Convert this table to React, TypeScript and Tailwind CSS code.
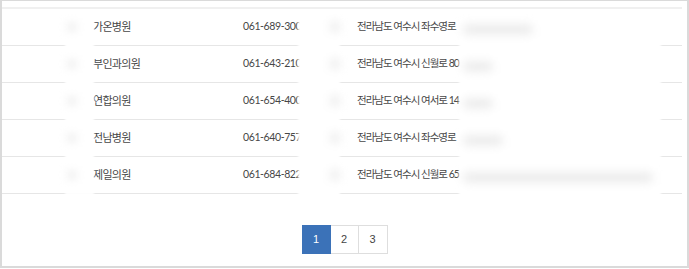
import React from "react";

type Clinic = { name: string; phone: string; addr: string; smudge: number };

const ROWS: Clinic[] = [
  { name: "가온병원", phone: "061-689-3000", addr: "전라남도 여수시 좌수영로", smudge: 70 },
  { name: "부인과의원", phone: "061-643-2100", addr: "전라남도 여수시 신월로 80", smudge: 30 },
  { name: "연합의원", phone: "061-654-4000", addr: "전라남도 여수시 여서로 14", smudge: 30 },
  { name: "전남병원", phone: "061-640-7575", addr: "전라남도 여수시 좌수영로", smudge: 40 },
  { name: "제일의원", phone: "061-684-8222", addr: "전라남도 여수시 신월로 65", smudge: 190 },
];

const FONT = "font-['Lato','Noto_Sans_CJK_KR',sans-serif]";

export default function App() {
  return (
    <div className={`relative w-[689px] h-[269px] overflow-hidden bg-white ${FONT}`}>
      <div className="relative h-[268px] border-t border-l-2 border-r-2 border-b-2 border-[#dadada]">
        <div className="mt-[6px] mr-[5px] border-t-2 border-[#f0f0f0]">
          {ROWS.map((r) => (
            <div key={r.name} className="flex h-[37px] items-center border-b border-[#e6e6e6] text-[#474747]">
              <div className="w-[91px] shrink-0" />
              <div className="w-[150px] shrink-0 text-[11px] tracking-[-0.7px]">{r.name}</div>
              <div className="w-[114px] shrink-0 text-[10.5px] tracking-[-0.4px]">{r.phone}</div>
              <div className="flex-1 text-[10.5px] tracking-[-1px]">{r.addr}</div>
            </div>
          ))}
        </div>

        <div className="mt-[31px] flex justify-center font-['Liberation_Sans',sans-serif] text-[11px]">
          <span className="flex h-[29px] w-[29px] items-center justify-center border border-[#3b72b8] bg-[#3b72b8] text-white">1</span>
          <span className="flex h-[29px] w-[28px] items-center justify-center border border-l-0 border-[#dedede] text-[#444]">2</span>
          <span className="flex h-[29px] w-[29px] items-center justify-center border border-l-0 border-[#dedede] text-[#444]">3</span>
        </div>

        {/* blurred masks over hidden columns */}
        <div className="absolute left-[63px] top-[12px] h-[182px] w-[29px] bg-white blur-[1px]">
          {ROWS.map((r, i) => (
            <div key={i} className="absolute left-[2px] h-[8px] w-[10px] rounded-full bg-[#ececec] blur-[4px]" style={{ top: 10 + i * 37 }} />
          ))}
        </div>
        <div className="absolute left-[296px] top-[10px] h-[186px] w-[42px] bg-white blur-[1px]">
          {ROWS.map((r, i) => (
            <div key={i} className="absolute right-[0px] h-[12px] w-[10px] rounded-full bg-[#eeeeee] blur-[4px]" style={{ top: 10 + i * 37 }} />
          ))}
        </div>
        <div className="absolute left-[457px] top-[16px] h-[188px] w-[202px] bg-white blur-[1px]">
          {ROWS.map((r, i) => (
            <div key={i} className="absolute left-[4px] h-[9px] rounded-full bg-[#e9e9e9] blur-[5px]" style={{ top: 8 + i * 37, width: r.smudge }} />
          ))}
        </div>
      </div>
    </div>
  );
}
